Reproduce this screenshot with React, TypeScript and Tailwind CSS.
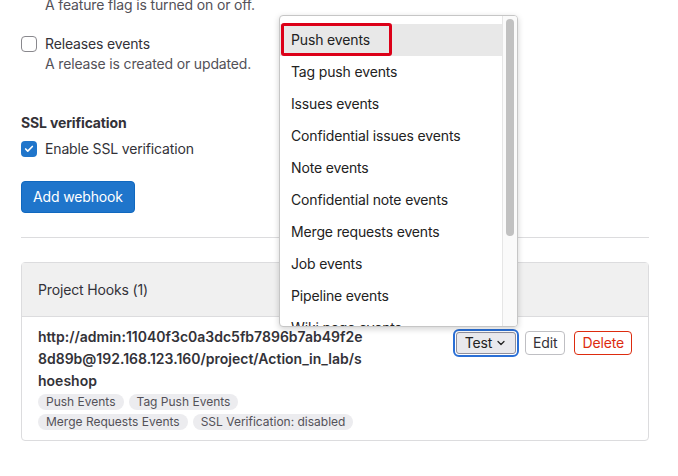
import { Check, ChevronDown } from "lucide-react";

const events = [
  "Push events",
  "Tag push events",
  "Issues events",
  "Confidential issues events",
  "Note events",
  "Confidential note events",
  "Merge requests events",
  "Job events",
  "Pipeline events",
  "Wiki page events",
];

const badges = [
  ["Push Events", "Tag Push Events"],
  ["Merge Requests Events", "SSL Verification: disabled"],
];

function Checkbox({ checked }: { checked?: boolean }) {
  if (checked) {
    return (
      <span className="mt-[2px] flex h-4 w-4 shrink-0 items-center justify-center rounded-[4px] bg-[#1f75cb]">
        <Check size={10} strokeWidth={4} className="text-white" />
      </span>
    );
  }
  return <span className="mt-[2px] h-4 w-4 shrink-0 rounded-[4px] border border-[#89888d] bg-white" />;
}

function EventsMenu() {
  return (
    <div className="absolute left-[279px] top-[15px] flex h-[312px] w-[239px] overflow-hidden rounded-[4px] border border-[#c6c6c6] bg-white shadow-[0_2px_6px_rgba(0,0,0,0.18)]">
      <ul className="flex-1 pt-[8px]">
        {events.map((ev, i) => (
          <li
            key={ev}
            className={
              i === 0
                ? "relative flex h-[32px] items-center bg-[#e8e8e8] pl-[11px] text-[#222]"
                : "flex h-[32px] items-center pl-[11px] text-[#222]"
            }
          >
            {ev}
            {i === 0 && (
              <span className="absolute left-[1px] top-[-1px] h-[33px] w-[111px] rounded-[3px] border-[3px] border-[#dc0018]" />
            )}
          </li>
        ))}
      </ul>
      <div className="w-[15px] border-l border-[#e6e6e6] bg-[#fafafa] px-[3px] pt-[3px]">
        <div className="h-[217px] rounded-full bg-[#c1c1c1]" />
      </div>
    </div>
  );
}

export default function App() {
  return (
    <div
      className="relative h-[476px] w-[678px] overflow-hidden bg-white text-[14px] leading-[20px] tracking-[-0.15px] text-[#333238]"
      style={{ fontFamily: "Inter, 'Noto Sans', sans-serif" }}
    >
      <div className="ml-[21px] w-[628px]">
        <p className="-mt-[5px] pl-[24px] text-[#535158]">A feature flag is turned on or off.</p>

        <div className="mt-[19px] flex gap-[8px]">
          <Checkbox />
          <div>
            <div>Releases events</div>
            <div className="text-[#535158]">A release is created or updated.</div>
          </div>
        </div>

        <h4 className="mt-[39px] font-bold">SSL verification</h4>
        <div className="mt-[6px] flex gap-[8px]">
          <Checkbox checked />
          <span>Enable SSL verification</span>
        </div>

        <button className="mt-[22px] h-[32px] rounded-[4px] border border-[#1068bf] bg-[#1f75cb] px-[11px] text-white">
          Add webhook
        </button>

        <hr className="mt-[24px] border-t border-[#dcdcde]" />

        <div className="mt-[24px] rounded-[4px] border border-[#dcdcde]">
          <div className="flex h-[54px] items-center border-b border-[#dcdcde] bg-[#f0f0f0] px-[16px]">
            Project Hooks (1)
          </div>
          <div className="flex items-start justify-between px-[16px] pb-[10px] pt-[9px]">
            <div>
              <div className="text-[14px] font-semibold leading-[22px] tracking-normal">
                <div>http://admin:11040f3c0a3dc5fb7896b7ab49f2e</div>
                <div>8d89b@192.168.123.160/project/Action_in_lab/s</div>
                <div>hoeshop</div>
              </div>
              <div className="mt-[2px] flex flex-col gap-[4px] tracking-normal">
                {badges.map((row, i) => (
                  <div key={i} className="flex gap-[5px]">
                    {row.map((b) => (
                      <span
                        key={b}
                        className="rounded-full bg-[#ececef] px-[8px] text-[12px] leading-[16px] text-[#535158]"
                      >
                        {b}
                      </span>
                    ))}
                  </div>
                ))}
              </div>
            </div>
            <div className="mt-[5px] flex items-center gap-[9px]">
              <button className="flex h-[22px] items-center gap-[3px] rounded-[3px] border border-[#8f8f9d] bg-[#e9e9ed] px-[8px] text-[#222] outline-2 outline-offset-1 outline-[#2a6fd6]">
                Test
                <ChevronDown size={12} strokeWidth={2.5} />
              </button>
              <button className="h-[24px] rounded-[4px] border border-[#bfbfc3] bg-white px-[7px] text-[#333238]">
                Edit
              </button>
              <button className="h-[24px] rounded-[4px] border border-[#dd2b0e] bg-white px-[7px] text-[#dd2b0e]">
                Delete
              </button>
            </div>
          </div>
        </div>
      </div>
      <EventsMenu />
    </div>
  );
}
